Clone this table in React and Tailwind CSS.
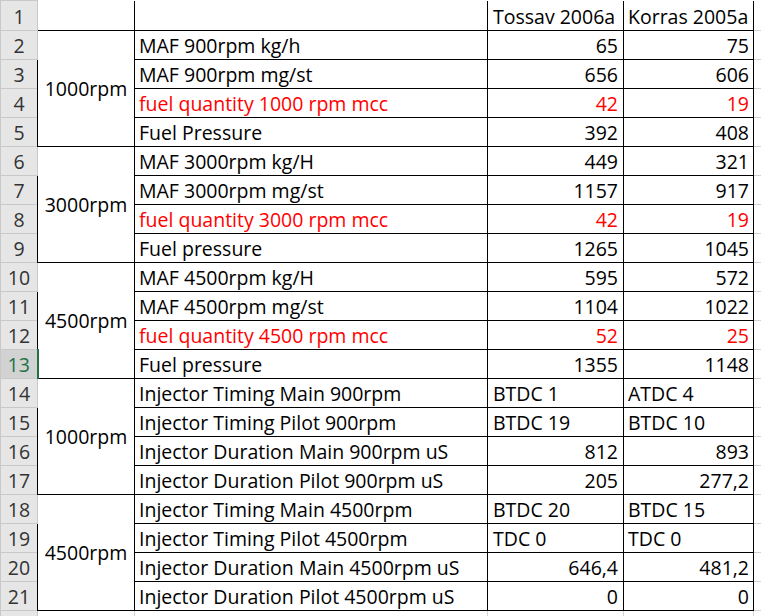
const groups = [
  {
    label: "1000rpm",
    rows: [
      ["MAF 900rpm kg/h", "65", "75"],
      ["MAF 900rpm mg/st", "656", "606"],
      ["fuel quantity 1000 rpm mcc", "42", "19", true],
      ["Fuel Pressure", "392", "408"],
    ],
  },
  {
    label: "3000rpm",
    rows: [
      ["MAF 3000rpm kg/H", "449", "321"],
      ["MAF 3000rpm mg/st", "1157", "917"],
      ["fuel quantity 3000 rpm mcc", "42", "19", true],
      ["Fuel pressure", "1265", "1045"],
    ],
  },
  {
    label: "4500rpm",
    rows: [
      ["MAF 4500rpm kg/H", "595", "572"],
      ["MAF 4500rpm mg/st", "1104", "1022"],
      ["fuel quantity 4500 rpm mcc", "52", "25", true],
      ["Fuel pressure", "1355", "1148"],
    ],
  },
  {
    label: "1000rpm",
    rows: [
      ["Injector Timing Main 900rpm", "BTDC 1", "ATDC 4"],
      ["Injector Timing Pilot 900rpm", "BTDC 19", "BTDC 10"],
      ["Injector Duration Main 900rpm uS", "812", "893"],
      ["Injector Duration Pilot 900rpm uS", "205", "277,2"],
    ],
  },
  {
    label: "4500rpm",
    rows: [
      ["Injector Timing Main 4500rpm", "BTDC 20", "BTDC 15"],
      ["Injector Timing Pilot 4500rpm", "TDC 0", "TDC 0"],
      ["Injector Duration Main 4500rpm uS", "646,4", "481,2"],
      ["Injector Duration Pilot 4500rpm uS", "0", "0"],
    ],
  },
];

const isNumber = (v) => /^[\d,]+$/.test(v);

function RowHead({ n }) {
  const selected = n === 13;
  return (
    <td
      className={`border border-[#c8c8c8] text-center align-bottom pb-[2px] ${
        selected
          ? "bg-[#d2d2d2] text-[#217346] border-r-2 border-r-[#217346]"
          : "bg-[#e6e6e6] text-[#333]"
      }`}
    >
      {n}
    </td>
  );
}

export default function App() {
  let rowNum = 2;
  return (
    <div
      className="w-[761px] h-[616px] overflow-hidden bg-white text-black text-[19.5px] leading-[22px]"
      style={{ fontFamily: "'Open Sans', Lato, sans-serif" }}
    >
      <table className="table-fixed w-[800px]">
        <colgroup>
          <col className="w-[37px]" />
          <col className="w-[97px]" />
          <col className="w-[353px]" />
          <col className="w-[136px]" />
          <col className="w-[130px]" />
          <col className="w-[47px]" />
        </colgroup>
        <tbody>
          <tr className="h-[30px]">
            <RowHead n={1} />
            <td className="border border-black border-t-0"></td>
            <td className="border border-black border-t-0"></td>
            <td className="border border-black border-t-0 align-bottom px-[5px] pb-[2px] whitespace-nowrap">
              Tossav 2006a
            </td>
            <td className="border border-black border-t-0 align-bottom px-[4px] pb-[2px] whitespace-nowrap">
              Korras 2005a
            </td>
            <td className="border-r border-b border-[#d4d4d4]"></td>
          </tr>
          {groups.map((g) =>
            g.rows.map(([name, c, d, red], ri) => {
              const n = rowNum++;
              const tone = red ? "text-[#ff0000]" : "";
              return (
                <tr key={n} className="h-[29px]">
                  <RowHead n={n} />
                  {ri === 0 && (
                    <td
                      rowSpan={4}
                      className="border border-black text-center align-middle"
                    >
                      {g.label}
                    </td>
                  )}
                  <td
                    className={`border border-black align-bottom pl-[4px] pb-[2px] whitespace-nowrap ${tone}`}
                  >
                    {name}
                  </td>
                  <td
                    className={`border border-black align-bottom px-[5px] pb-[2px] whitespace-nowrap ${tone} ${
                      isNumber(c) ? "text-right" : "text-left"
                    }`}
                  >
                    {c}
                  </td>
                  <td
                    className={`border border-black align-bottom px-[4px] pb-[2px] whitespace-nowrap ${tone} ${
                      isNumber(d) ? "text-right" : "text-left"
                    }`}
                  >
                    {d}
                  </td>
                  <td className="border-r border-b border-[#d4d4d4]"></td>
                </tr>
              );
            })
          )}
          <tr className="h-[29px]">
            <td className="bg-[#e6e6e6] border border-[#c8c8c8]"></td>
            <td className="border-r border-[#d4d4d4]"></td>
            <td className="border-r border-[#d4d4d4]"></td>
            <td className="border-r border-[#d4d4d4]"></td>
            <td className="border-r border-[#d4d4d4]"></td>
            <td className="border-r border-[#d4d4d4]"></td>
          </tr>
        </tbody>
      </table>
    </div>
  );
}
